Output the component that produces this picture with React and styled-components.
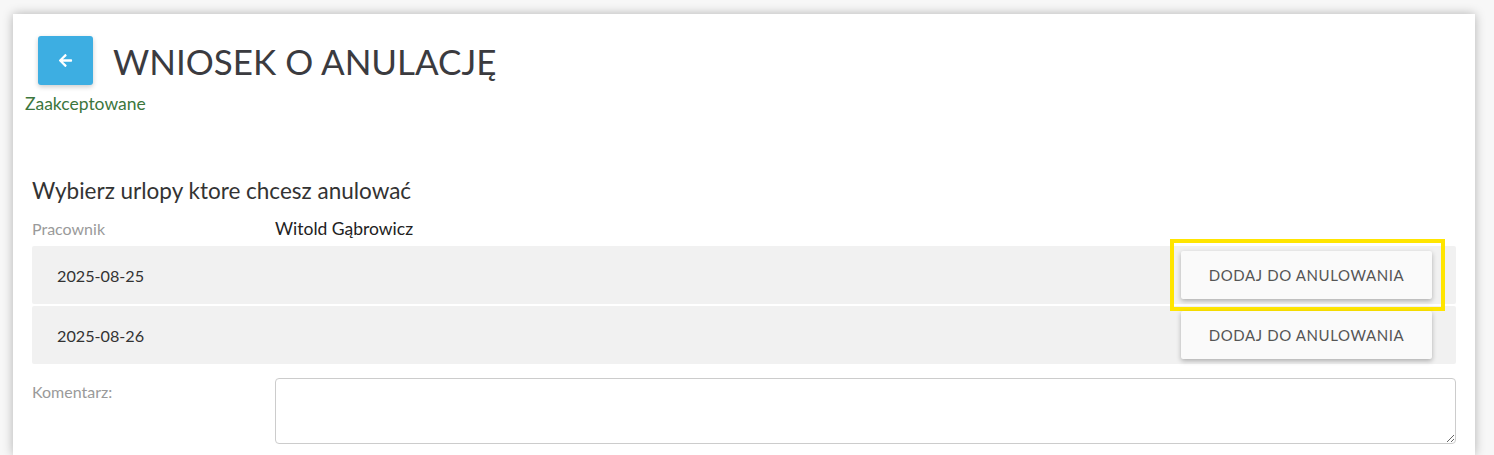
import React from 'react';
import styled, { createGlobalStyle } from 'styled-components';
import { FaArrowLeft } from 'react-icons/fa';

const GlobalStyle = createGlobalStyle`
  html, body {
    margin: 0;
    padding: 0;
    background: #f7f7f7;
    font-family: Lato, "Open Sans", Arial, sans-serif;
    overflow: hidden;
  }
`;

const Page = styled.div`
  padding: 14px 19px 0 13px;
  height: 455px;
  box-sizing: border-box;
`;

const Card = styled.div`
  background: #fff;
  height: 100%;
  box-shadow: 0 0 10px rgba(0, 0, 0, 0.28);
  padding: 22px 19px 0 12px;
  box-sizing: border-box;
`;

const Header = styled.div`
  display: flex;
  align-items: center;
  gap: 20px;
  padding-left: 13px;
`;

const BackButton = styled.button`
  width: 55px;
  height: 49px;
  border: none;
  border-radius: 3px;
  background: #3daee2;
  color: #fff;
  display: flex;
  align-items: center;
  justify-content: center;
  box-shadow: 0 2px 5px rgba(0, 0, 0, 0.2);
  cursor: pointer;
`;

const Title = styled.h1`
  margin: 0;
  font-size: 35px;
  font-weight: 400;
  color: #3b3b3f;
`;

const Status = styled.div`
  margin-top: 8px;
  font-size: 17.5px;
  color: #3c763d;
`;

const Section = styled.div`
  padding-left: 7px;
  margin-top: 63px;
`;

const Heading = styled.h2`
  margin: 0 0 14px;
  font-size: 22.5px;
  font-weight: 400;
  color: #333;
`;

const FieldRow = styled.div`
  display: grid;
  grid-template-columns: 243px 1fr;
  align-items: ${(p) => (p.$top ? 'start' : 'center')};
  margin-top: ${(p) => p.$gap || 0}px;
`;

const Label = styled.div`
  font-size: 16px;
  color: #9a9a9a;
  padding-top: ${(p) => p.$pad || 0}px;
`;

const Value = styled.div`
  font-size: 17.5px;
  color: #222;
`;

const DateList = styled.div`
  display: flex;
  flex-direction: column;
  gap: 2px;
  margin-top: 7px;
`;

const DateRow = styled.div`
  display: flex;
  align-items: center;
  justify-content: space-between;
  height: 58px;
  padding: 0 24px 0 25px;
  background: #f1f1f1;
  border-radius: 2px;
`;

const DateText = styled.span`
  font-size: 16.2px;
  color: #333;
`;

const AddButton = styled.button`
  position: relative;
  width: 251px;
  height: 48px;
  border: none;
  border-radius: 2px;
  background: #fafafa;
  font-family: inherit;
  font-size: 15px;
  letter-spacing: 0.6px;
  text-transform: uppercase;
  color: #555;
  box-shadow: 0 2px 5px rgba(0, 0, 0, 0.28);
  cursor: pointer;

  &::after {
    content: '';
    display: ${(p) => (p.$highlight ? 'block' : 'none')};
    position: absolute;
    inset: -12px -13px -12px -11px;
    border: 4px solid #ffe500;
    pointer-events: none;
  }
`;

const Comment = styled.textarea`
  height: 66px;
  box-sizing: border-box;
  border: 1px solid #ccc;
  border-radius: 4px;
  resize: vertical;
  font-family: inherit;
  font-size: 15px;
  padding: 6px 10px;
`;

const dates = ['2025-08-25', '2025-08-26'];

export default function App() {
  return (
    <>
      <GlobalStyle />
      <Page>
        <Card>
          <Header>
            <BackButton aria-label="Wstecz">
              <FaArrowLeft size={15} />
            </BackButton>
            <Title>WNIOSEK O ANULACJĘ</Title>
          </Header>
          <Status>Zaakceptowane</Status>
          <Section>
            <Heading>Wybierz urlopy ktore chcesz anulować</Heading>
            <FieldRow>
              <Label>Pracownik</Label>
              <Value>Witold Gąbrowicz</Value>
            </FieldRow>
            <DateList>
              {dates.map((d, i) => (
                <DateRow key={d}>
                  <DateText>{d}</DateText>
                  <AddButton $highlight={i === 0}>Dodaj do anulowania</AddButton>
                </DateRow>
              ))}
            </DateList>
            <FieldRow $top $gap={14}>
              <Label $pad={4}>Komentarz:</Label>
              <Comment />
            </FieldRow>
          </Section>
        </Card>
      </Page>
    </>
  );
}
